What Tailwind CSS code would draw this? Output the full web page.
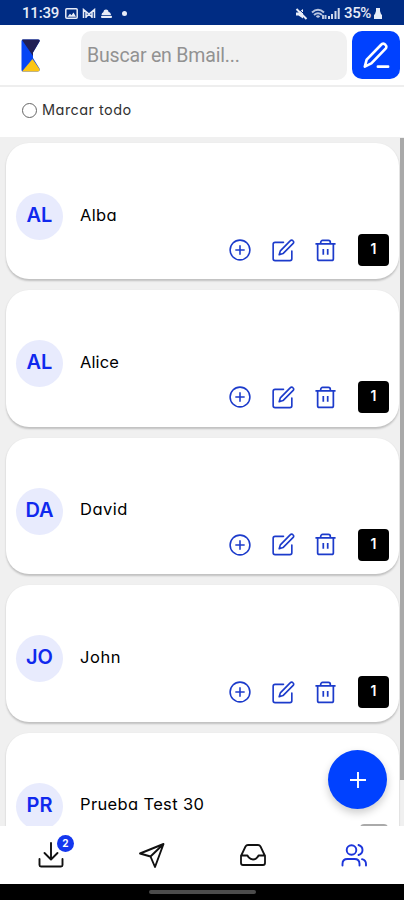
<!DOCTYPE html>
<html lang="es">
<head>
<meta charset="utf-8">
<meta name="viewport" content="width=device-width, initial-scale=1">
<title>Bmail</title>
<script src="https://cdn.jsdelivr.net/npm/@tailwindcss/browser@4"></script>
</head>
<body class="h-[900px] overflow-hidden bg-white font-['Inter',sans-serif] [font-feature-settings:'cv11']">
<svg class="hidden">
  <symbol id="add" viewBox="0 0 24 24"><circle cx="12" cy="12" r="10.800"/><path d="M12 7.500v9M7.500 12h9"/></symbol>
  <symbol id="edit" viewBox="0 0 24 24"><path d="M12 3.500H3.200a2 2 0 0 0-2 2V20.500a2 2 0 0 0 2 2H18.700a2 2 0 0 0 2-2v-8"/><path d="M19.200 1.700a1.700 1.700 0 0 1 2.500 0l.4.4a1.700 1.700 0 0 1 0 2.500L11.500 15.200l-4 1.200 1.200-4z"/></symbol>
  <symbol id="trash" viewBox="0 0 24 24"><path d="M1.500 5.200h21M3.800 5.200V20.500a1.800 1.800 0 0 0 1.800 1.800h12.800a1.800 1.800 0 0 0 1.800-1.800V5.200M7 5.200V3.500a2 2 0 0 1 2-2h6a2 2 0 0 1 2 2v1.700M9.700 10.500v6M14.300 10.500v6"/></symbol>
</svg>
<div class="flex h-full flex-col">
  <div class="flex h-[25px] shrink-0 items-center bg-[#002c83] pl-[22px] font-['Roboto',sans-serif] text-[#e8edf8]">
    <span class="w-[38px] pt-0.5 text-[15px] font-medium leading-none tracking-[-0.2px]">11:39</span>
    <svg class="ml-[5px] mt-0.5 h-[11px] w-[13px]" viewBox="0 0 13 11"><rect x=".8" y=".8" width="11.400" height="9.400" rx="1" fill="none" stroke="currentColor" stroke-width="1.500"/><path d="M2.500 8.800l2.500-3 1.500 1.500 2-2.800 2.500 4.300z" fill="currentColor"/></svg>
    <svg class="ml-[4px] mt-0.5 h-[11px] w-[14px]" viewBox="0 0 14 11" fill="none" stroke="currentColor"><path d="M1.500 10V1.500L7 6l5.500-4.500V10M4 10V4M10 10V4M4 9l3-3 3 3" stroke-width="1.500"/></svg>
    <svg class="ml-[4px] mt-0.5 h-[11px] w-[13px]" viewBox="0 0 13 11" fill="currentColor"><path d="M3.500 4a2.500 2.500 0 0 1 5 0q2 0 2.500 3H1.500q0-2 2-3z"/><rect x="1" y="7.700" width="11" height="2.300" rx="1"/></svg>
    <span class="ml-[9px] mt-0.5 size-[5px] rounded-full bg-[#e8edf8]"></span>
    <svg class="ml-[168px] mt-0.5 h-[12px] w-[13px]" viewBox="0 0 13 12"><path d="M1 4.500h2.500L8 1v9.500L3.500 7.500H1z" fill="currentColor"/><path d="M2.500 0l10 9" stroke="#002c83" stroke-width="1"/><path d="M1.500 1l10 10" stroke="currentColor" stroke-width="2"/></svg>
    <svg class="ml-[3px] mt-0.5 h-[12px] w-[16px] opacity-80" viewBox="0 0 16 12" fill="none" stroke="currentColor" stroke-width="2"><path d="M1 4.500q6-5.500 12 0M3 7q4-3.500 8 0M5.500 9q1.500-1.300 3 0M12 7v4M14.500 7v4"/></svg>
    <svg class="ml-[1px] mt-0.5 h-[11px] w-[12px] opacity-90" viewBox="0 0 12 11" fill="currentColor"><path d="M0 8h2v3H0zM3 6h2v5H3zM6.500 3h2v8h-2zM9.700 0h2v11h-2z"/></svg>
    <span class="ml-[4px] w-[28px] pt-0.5 text-[15px] font-medium leading-none tracking-[-0.4px]">35%</span>
    <svg class="ml-px mt-0.5 h-[11px] w-[10px]" viewBox="0 0 10 11" fill="currentColor"><path d="M3 0h4v3l1 3 1 1v4H1V7l1-1 1-3z"/></svg>
  </div>

  <header class="flex h-[62px] shrink-0 items-center border-b-2 border-[#eeeeee] pl-[21px] pr-1">
    <svg class="h-[33px] w-[19px]" viewBox="0 0 19 33"><path d="M2 .5H17q2 0 1.500 2L12 13.500V19L18.500 29.500q1 3-2 3H2Q.5 32.500.5 31V2Q.5.5 2 .5z" fill="#0645f5"/><path d="M1.500.5H17q2.500 0 1.500 2L12 13.500V17L1 1z" fill="#211f55"/><path d="M11.500 20L18.500 30q.7 2.500-2 2.500H1z" fill="#fcc515"/></svg>
    <div class="ml-[41px] flex h-[49px] w-[266px] items-center rounded-[10px] bg-[#f1f1f1] pl-[6px] pt-px font-['Roboto',sans-serif] text-[19.500px] tracking-[-0.18px] text-[#929292]">Buscar en Bmail...</div>
    <button class="ml-[5px] flex size-[48px] items-center justify-center rounded-[10px] bg-[#0041ff]">
      <svg class="size-[28px]" viewBox="0 0 30 30" fill="none" stroke="white" stroke-width="2.800" stroke-linecap="round" stroke-linejoin="round"><path d="M3 27.500L5 20 20.500 4a2.800 2.800 0 0 1 4.500 0 2.800 2.800 0 0 1 0 4.500L10 24zM17 27.500h11"/></svg>
    </button>
  </header>

  <div class="flex h-[50px] shrink-0 items-center pb-[3px] pl-[22px]">
    <span class="size-[15px] rounded-full border border-[#666]"></span>
    <span class="ml-[5px] pb-[2px] text-[14.500px] tracking-[0.45px] text-[#333]">Marcar todo</span>
  </div>

  <main class="relative min-h-0 flex-1 overflow-hidden bg-[#f0f0f0]">
    <div id="contacts" class="flex flex-col gap-[11px] pl-[6px] pr-[5px] pt-[6px]"></div>
    <div class="absolute right-0 top-[1px] h-[642px] w-1 bg-[#a9a9a9]"></div>
    <button class="absolute left-[328px] top-[613px] flex size-[59px] items-center justify-center rounded-full bg-[#0041ff] shadow-[0_4px_8px_rgba(0,0,0,0.2)]">
      <svg class="size-[16px]" viewBox="0 0 16 16" stroke="white" stroke-width="1.900"><path d="M8 0v16M0 8h16"/></svg>
    </button>
  </main>

  <nav class="grid h-[58px] shrink-0 grid-cols-4 items-center bg-white text-[#111]">
    <div class="relative flex justify-center">
      <svg class="h-[26px] w-[28px]" viewBox="0 0 28 26" fill="none" stroke="currentColor" stroke-width="1.900" stroke-linecap="round" stroke-linejoin="round"><path d="M14 1v16M7.500 11l6.500 6.500L20.500 11M2.500 17v6q0 1.500 1.500 1.500h20q1.500 0 1.500-1.500v-6"/></svg>
      <span class="absolute left-[57px] top-[-7px] flex size-[17px] items-center justify-center rounded-full bg-[#1437ee] text-[10px] font-bold text-white">2</span>
    </div>
    <div class="flex justify-center"><svg class="size-[27px]" viewBox="0 0 27 27" fill="none" stroke="currentColor" stroke-width="1.900" stroke-linejoin="round"><path d="M2 11.500L25.500 2 17 25l-4.500-10.500zM2 11.500l10.500 3L25.500 2"/></svg></div>
    <div class="flex justify-center"><svg class="h-[24px] w-[28px]" viewBox="0 0 28 24" fill="none" stroke="currentColor" stroke-width="1.800" stroke-linecap="round" stroke-linejoin="round"><path d="M2 13L6.500 3.500Q7.300 2 9 2h10q1.700 0 2.500 1.500L26 13v7q0 2-2 2H4q-2 0-2-2zM2 12.500h6.500q.5 1 1.500 2.200 1.500 1.800 4 1.800t4-1.800q1-1.200 1.500-2.200H26"/></svg></div>
    <div class="flex justify-center text-[#1c35db]"><svg class="h-[24px] w-[28px]" viewBox="0 0 28 24" fill="none" stroke="currentColor" stroke-width="1.900" stroke-linecap="round"><circle cx="11.500" cy="7" r="4.800"/><path d="M2.500 22.500v-1.500q0-5 5-5h7q5 0 5 5v1.500M18.500 2q4 1.200 4 5t-4 5M22 16.200q4 1 4 5v1.300"/></svg></div>
  </nav>
  <div class="flex h-[16px] shrink-0 items-center justify-center bg-black"><span class="h-[4px] w-[107px] rounded-full bg-[#4b4b4b]"></span></div>
</div>
<template id="card">
  <article class="flex h-[136.400px] shrink-0 flex-col rounded-[23px] bg-white shadow-[0_1.500px_2px_rgba(0,0,0,0.2)]">
    <div class="flex h-[91px] items-end pt-[50px]">
      <div data-initials class="ml-[10px] mb-[-6px] flex size-[47px] shrink-0 items-center justify-center rounded-full bg-[#e8ebfd] pb-[3px] text-[20px] font-semibold text-[#1029ee]"></div>
      <div data-name class="ml-[17px] mb-[6.500px] text-[16.500px] leading-[26px] text-black"></div>
    </div>
    <div class="ml-[223px] mt-auto mb-[13.400px] flex h-[32px] items-center text-[#1c3bcb]">
      <svg class="size-[22px]" fill="none" stroke="currentColor" stroke-width="1.700" stroke-linecap="round" stroke-linejoin="round"><use href="#add"/></svg>
      <svg class="ml-[21px] size-[23px]" fill="none" stroke="currentColor" stroke-width="1.700" stroke-linecap="round" stroke-linejoin="round"><use href="#edit"/></svg>
      <svg class="ml-[19px] size-[23px]" fill="none" stroke="currentColor" stroke-width="1.800"><use href="#trash"/></svg>
      <span data-count class="ml-[21px] flex h-[32px] w-[31px] items-center justify-center rounded-[4px] bg-black pb-[3px] text-[14px] font-semibold text-white">1</span>
    </div>
  </article>
</template>
<script>
  const contacts = [
    ["AL", "Alba", 0.35], ["AL", "Alice", 0.1], ["DA", "David", 0.5], ["JO", "John", 0.6], ["PR", "Prueba Test 30", 0.35]
  ];
  const list = document.getElementById("contacts");
  const template = document.getElementById("card");
  contacts.forEach(([initials, name, spacing], i) => {
    const card = template.content.cloneNode(true);
    card.querySelector("[data-initials]").textContent = initials;
    const label = card.querySelector("[data-name]");
    label.textContent = name;
    label.style.letterSpacing = spacing + "px";
    if (i === contacts.length - 1) {
      const count = card.querySelector("[data-count]");
      count.textContent = "";
      count.className = "ml-[23px] mt-[-1px] h-[31px] w-[28px] rounded-[4px] bg-[#aaaaaa]";
    }
    list.appendChild(card);
  });
</script>
</body>
</html>
